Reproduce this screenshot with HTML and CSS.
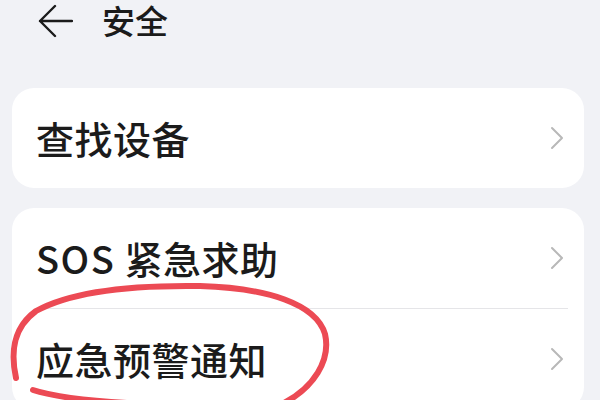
FILE: index.html
```html
<!DOCTYPE html>
<html lang="zh-CN">

<head>
    <meta charset="UTF-8">
    <meta name="viewport" content="width=device-width, initial-scale=1.0">
    <title>安全</title>
    <link rel="stylesheet" href="styles.css">
</head>

<body>
    <div class="header">
        <svg class="back" width="36" height="34" viewBox="0 0 36 34">
            <path d="M18 2 L3 17 L18 32 M3 17 H35" fill="none" stroke="#1b1b1b" stroke-width="2.4" stroke-linecap="round" stroke-linejoin="round"/>
        </svg>
        <h1 class="title">安全</h1>
    </div>

    <div class="content">
        <div class="card">
            <div class="row">
                <span class="label">查找设备</span>
                <svg class="chevron" width="14" height="24" viewBox="0 0 14 24">
                    <path d="M2 2 L12 12 L2 22" fill="none" stroke="#b8b8b8" stroke-width="2" stroke-linecap="round" stroke-linejoin="round"/>
                </svg>
            </div>
        </div>

        <div class="card">
            <div class="row">
                <span class="label"><span class="latin">SOS</span> 紧急求助</span>
                <svg class="chevron" width="14" height="24" viewBox="0 0 14 24">
                    <path d="M2 2 L12 12 L2 22" fill="none" stroke="#b8b8b8" stroke-width="2" stroke-linecap="round" stroke-linejoin="round"/>
                </svg>
            </div>
            <div class="divider"></div>
            <div class="row">
                <span class="label">应急预警通知</span>
                <svg class="chevron" width="14" height="24" viewBox="0 0 14 24">
                    <path d="M2 2 L12 12 L2 22" fill="none" stroke="#b8b8b8" stroke-width="2" stroke-linecap="round" stroke-linejoin="round"/>
                </svg>
            </div>
        </div>
    </div>

    <!-- hand drawn circle on top of the screenshot -->
    <svg class="mark" width="600" height="400" viewBox="0 0 600 400">
        <path d="M16 378 C10 350 14 327 36 311 C72 291 132 285 200 286 C268 288 316 304 325 334 C331 360 314 388 282 404" fill="none" stroke="#ec4a54" stroke-width="6" stroke-linecap="round"/>
        <path d="M33 390 C70 402 150 406 250 406" fill="none" stroke="#ec4a54" stroke-width="6" stroke-linecap="round"/>
    </svg>
</body>

</html>
```

FILE: styles.css
```css
body {
    margin: 0;
    width: 600px;
    height: 400px;
    overflow: hidden;
    position: relative;
    background: #f1f2f6;
    color: #1b1b1b;
    font-family: 'Noto Sans CJK SC', 'Noto Sans', sans-serif;
}

.header {
    height: 42px;
    display: flex;
    align-items: center;
    gap: 29px;
    padding-left: 37px;
}

.back {
    display: block;
}

.title {
    margin: 0;
    font-size: 33px;
    font-weight: 500;
    line-height: 1.2;
}

.content {
    display: flex;
    flex-direction: column;
    gap: 20px;
    padding: 46px 16px 0 12px;
}

.card {
    background: #fff;
    border-radius: 22px;
}

.row {
    height: 100px;
    display: flex;
    align-items: center;
    justify-content: space-between;
    padding: 0 20px 0 24px;
}

.label {
    font-size: 38px;
    font-weight: 500;
    line-height: 1.2;
    letter-spacing: 0.5px;
}

.latin {
    letter-spacing: 1.5px;
}

.chevron {
    display: block;
}

.divider {
    height: 1px;
    background: #e5e5e8;
    margin: 0 16px 0 23px;
}

.mark {
    position: absolute;
    left: 0;
    top: 0;
    pointer-events: none;
}
```
